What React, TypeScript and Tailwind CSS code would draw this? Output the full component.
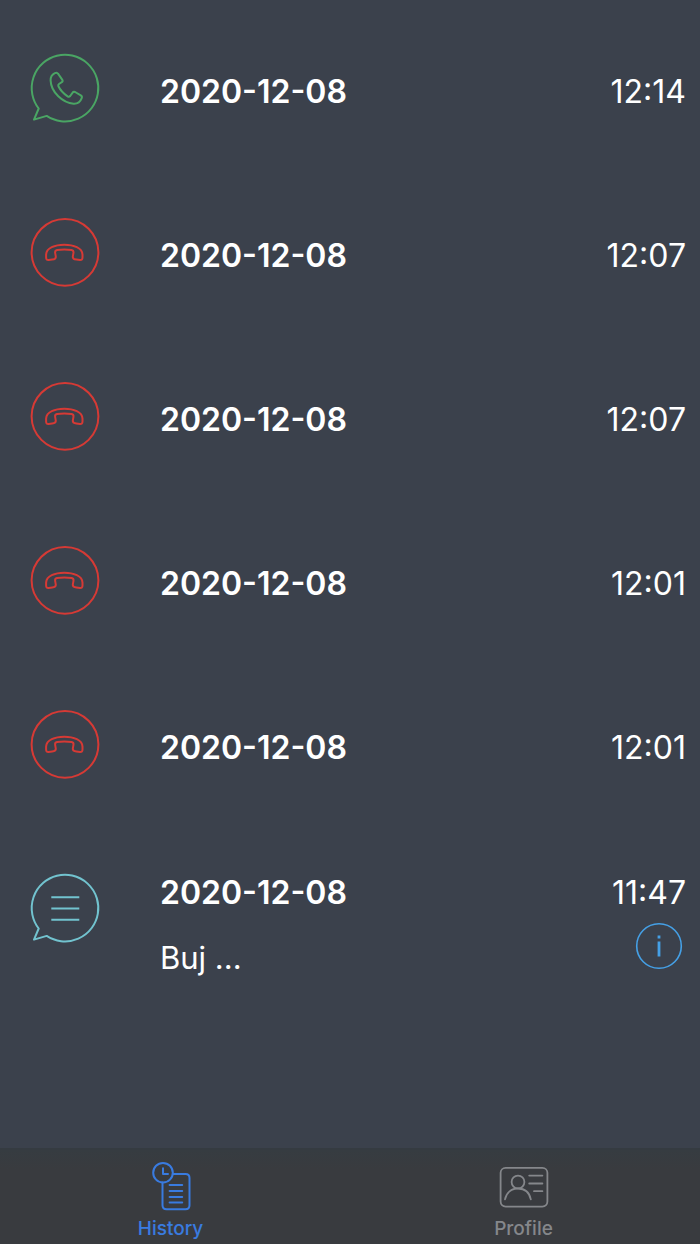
import type { ReactNode } from "react";

type CallKind = "answered" | "missed" | "message";

interface HistoryEntry {
  id: number;
  kind: CallKind;
  date: string;
  time: string;
  message?: string;
}

const entries: HistoryEntry[] = [
  { id: 1, kind: "answered", date: "2020-12-08", time: "12:14" },
  { id: 2, kind: "missed", date: "2020-12-08", time: "12:07" },
  { id: 3, kind: "missed", date: "2020-12-08", time: "12:07" },
  { id: 4, kind: "missed", date: "2020-12-08", time: "12:01" },
  { id: 5, kind: "missed", date: "2020-12-08", time: "12:01" },
  { id: 6, kind: "message", date: "2020-12-08", time: "11:47", message: "Buj ..." },
];

// Round speech bubble with a tail at the bottom left
const BUBBLE = "M17.7 63.9 L5 67.6 L9.7 56.5 A33.3 33.3 0 1 1 17.7 63.9 Z";

function EntryIcon({ kind }: { kind: CallKind }) {
  if (kind === "answered") {
    return (
      <svg
        className="size-[72px] shrink-0 text-[#4aa564]"
        viewBox="0 0 72 72"
        fill="none"
        stroke="currentColor"
        strokeWidth={2}
        strokeLinejoin="round"
        aria-label="Answered call"
      >
        <path d={BUBBLE} />
        <path d="M25.8 21.2 C27.2 20.4 28.3 20.6 29 21.7 L33.2 27.6 C33.9 28.7 33.8 29.5 32.8 30.2 L30 32 C29.2 32.6 29 33.3 29.4 34.3 C31.4 38.4 34.8 41.8 38.6 44.4 C39.6 45 40.5 44.8 41.2 44 L43.6 40.6 C44.2 39.7 45.1 39.5 46.1 40 L51.8 43.4 C52.9 44.1 53.2 45 52.7 46.1 C51.4 49.6 48.6 51.9 44.6 51.7 C34 51 22 40.4 21.6 28.4 C21.5 25.2 23.2 22.6 25.8 21.2 Z" />
      </svg>
    );
  }

  if (kind === "missed") {
    return (
      <svg
        className="size-[72px] shrink-0 text-[#d63a35]"
        viewBox="0 0 72 72"
        fill="none"
        stroke="currentColor"
        strokeWidth={2}
        strokeLinejoin="round"
        aria-label="Missed call"
      >
        <circle cx="36" cy="36.3" r="33.4" />
        <path d="M35.3 28.7 C44.6 28.7 53.3 31.8 53.5 38.6 V41.6 C53.5 43.4 52.7 44.1 51 44 L47.4 43.6 C45 43.3 43.6 42.4 43.8 40.6 L44.5 36.6 C44.7 35.2 44 34.4 42.6 34.1 C38 33.4 32.6 33.4 28 34.1 C26.6 34.4 25.9 35.2 26.1 36.6 L26.8 40.6 C27 42.4 25.6 43.3 23.2 43.6 L19.6 44 C17.9 44.1 17.1 43.4 17.1 41.6 V38.6 C17.3 31.8 26 28.7 35.3 28.7 Z" />
      </svg>
    );
  }

  return (
    <svg
      className="size-[72px] shrink-0 text-[#72c3cf]"
      viewBox="0 0 72 72"
      fill="none"
      stroke="currentColor"
      strokeWidth={2}
      strokeLinejoin="round"
      aria-label="Message"
    >
      <path d={BUBBLE} />
      <path d="M22.3 25.3 H50.3 M22.3 36.5 H50.3 M22.3 47.7 H50.3" />
    </svg>
  );
}

function InfoIcon() {
  return (
    <svg className="size-12" viewBox="0 0 48 48" fill="none" stroke="currentColor">
      <circle cx="24" cy="24" r="22.3" strokeWidth={1.6} />
      <path d="M24 13.6 V16.6 M24 19.4 V34.6" strokeWidth={2.8} />
    </svg>
  );
}

function HistoryIcon() {
  return (
    <svg
      className="h-[50px] w-[52px]"
      viewBox="-6 0 52 50"
      fill="none"
      stroke="currentColor"
      strokeWidth={2}
      strokeLinecap="round"
      strokeLinejoin="round"
    >
      <circle cx="12" cy="11.7" r="9.8" />
      <path d="M12 7.2 V12.9 H17" />
      <path d="M22 12.9 H34.5 Q38.5 12.9 38.5 16.9 V44.2 Q38.5 48.2 34.5 48.2 H15.5 Q11.5 48.2 11.5 44.2 V21.6" />
      <path d="M18.6 23.9 H31.2 M18.6 29.9 H31.2 M18.6 35.9 H31.2 M18.6 41.6 H31.2" />
    </svg>
  );
}

function ProfileIcon() {
  return (
    <svg
      className="h-[50px] w-[52px]"
      viewBox="0 0 52 50"
      fill="none"
      stroke="currentColor"
      strokeWidth={1.8}
      strokeLinecap="round"
    >
      <rect x="2.6" y="6.8" width="46.8" height="38.8" rx="5" />
      <circle cx="20" cy="21" r="6.4" />
      <path d="M7 38.4 C8.4 31.6 13.4 27.5 20 27.5 C26.6 27.5 31.4 31.6 32.8 38.4" />
      <path d="M31.2 14.6 H44.4 M31.2 22.5 H44.4 M36 30.2 H44.4" />
    </svg>
  );
}

function HistoryRow({ entry }: { entry: HistoryEntry }) {
  // Rows with a message start at the icon's top, the others sit at its middle
  const textPadding = entry.message ? "" : "pt-[19px]";

  return (
    <li className="flex h-[164px] items-start pt-[46px] pr-3.5 pl-[29px]">
      <EntryIcon kind={entry.kind} />
      <div className={`ml-[59px] min-w-0 flex-1 ${textPadding}`}>
        <p className="font-semibold">{entry.date}</p>
        {entry.message && <p className="mt-6 truncate text-[31px] leading-10">{entry.message}</p>}
      </div>
      <div className={`flex flex-col items-end ${textPadding}`}>
        <time>{entry.time}</time>
        {entry.message && (
          <button type="button" aria-label="Details" className="mt-2 mr-[3px] text-[#45a0e6]">
            <InfoIcon />
          </button>
        )}
      </div>
    </li>
  );
}

function TabButton({ label, active, icon }: { label: string; active?: boolean; icon: ReactNode }) {
  return (
    <button
      type="button"
      aria-current={active ? "page" : undefined}
      className={`flex flex-col items-center gap-1.5 ${active ? "text-[#397be0]" : "text-[#85878b]"}`}
    >
      {icon}
      <span className="text-[19px] leading-6 font-medium">{label}</span>
    </button>
  );
}

export default function App() {
  return (
    <div className="flex min-h-screen flex-col overflow-hidden bg-[#3b414c] font-['Inter',sans-serif] text-white">
      <main className="flex-1 pt-1.5">
        <ul className="text-[32px] leading-[42px]">
          {entries.map((entry) => (
            <HistoryRow key={entry.id} entry={entry} />
          ))}
        </ul>
      </main>

      <nav className="border-t-2 border-[#353b41] bg-linear-to-b from-[#363c41] to-[#393b3f] to-20%">
        <div className="-ml-1.5 grid grid-cols-2 pt-[11px] pb-[3px]">
          <TabButton label="History" active icon={<HistoryIcon />} />
          <TabButton label="Profile" icon={<ProfileIcon />} />
        </div>
      </nav>
    </div>
  );
}
